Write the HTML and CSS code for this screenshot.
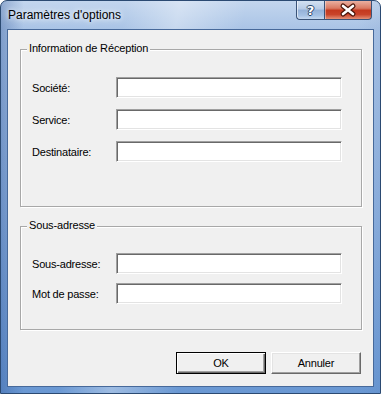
FILE: index.html
```html
<!DOCTYPE html>
<html lang="fr">
<head>
<meta charset="utf-8">
<title>Paramètres d'options</title>
<link rel="stylesheet" href="styles.css">
</head>
<body>
<div class="window">
  <div class="titlebar">
    <span class="title">Paramètres d'options</span>
    <div class="caption-btns">
      <div class="cbtn help"><span class="qmark">?</span></div>
      <div class="cbtn close">
        <svg width="46" height="18" viewBox="0 0 46 18">
          <path d="M18 5 L28 13 M28 5 L18 13" stroke="#4a1408" stroke-width="5" stroke-linecap="round" fill="none"/>
          <path d="M18 5 L28 13 M28 5 L18 13" stroke="#ffffff" stroke-width="2.6" stroke-linecap="round" fill="none"/>
        </svg>
      </div>
    </div>
  </div>
  <div class="client">
    <div class="group g1">
      <span class="legend">Information de Réception</span>
      <div class="rows rows1">
        <div class="row"><span class="label">Société:</span><div class="input"></div></div>
        <div class="row"><span class="label">Service:</span><div class="input"></div></div>
        <div class="row"><span class="label">Destinataire:</span><div class="input"></div></div>
      </div>
    </div>
    <div class="group g2">
      <span class="legend">Sous-adresse</span>
      <div class="rows rows2">
        <div class="row"><span class="label">Sous-adresse:</span><div class="input"></div></div>
        <div class="row"><span class="label">Mot de passe:</span><div class="input"></div></div>
      </div>
    </div>
    <div class="buttons">
      <div class="btn default">OK</div>
      <div class="btn">Annuler</div>
    </div>
  </div>
</div>
</body>
</html>
```
FILE: styles.css
```css
html, body {
  margin: 0;
  padding: 0;
  background: #ffffff;
}
body {
  font-family: "Liberation Sans", Arial, sans-serif;
}
.window {
  box-sizing: border-box;
  width: 381px;
  height: 394px;
  border: 1px solid #2b4a72;
  border-radius: 7px 7px 0 0;
  padding: 0 6px 6px 6px;
  display: flex;
  flex-direction: column;
  background:
    linear-gradient(100deg, rgba(255,255,255,0) 28%, rgba(255,255,255,0.35) 40%, rgba(255,255,255,0) 55%),
    linear-gradient(to right, rgba(30,70,140,0.3) 0, rgba(30,70,140,0) 6%, rgba(30,70,140,0) 94%, rgba(30,70,140,0.05) 100%),
    linear-gradient(to bottom, #c3d6ee 0, #aac4e6 28px, #8cafdd 55%, #6a98d3 100%);
}
.titlebar {
  height: 28px;
  flex: none;
  display: flex;
  justify-content: space-between;
  align-items: flex-start;
}
.title {
  margin: 7px 0 0 1px;
  font-size: 12px;
  line-height: 14px;
  color: #000;
  text-shadow: 0 0 4px #e8f0fa, 0 0 8px #ffffff;
}
.caption-btns {
  display: flex;
  margin-right: 2px;
}
.cbtn {
  box-sizing: border-box;
  height: 19px;
  border: 1px solid #3a5378;
  border-top: none;
  display: flex;
  align-items: center;
  justify-content: center;
}
.help {
  width: 28px;
  border-right: none;
  border-radius: 0 0 0 4px;
  background: linear-gradient(to bottom, #d3e1f1 0, #b6cbe6 45%, #94b1d8 50%, #a5c1e4 80%, #c4d8f0 100%);
  box-shadow: inset 1px 0 rgba(255,255,255,0.6);
}
.qmark {
  font-family: "DejaVu Sans", sans-serif;
  font-weight: bold;
  font-size: 13px;
  line-height: 13px;
  color: #ffffff;
  text-shadow: 1px 0 0 #2a4366, -1px 0 0 #2a4366, 0 1px 0 #2a4366, 0 -1px 0 #2a4366;
}
.close {
  width: 48px;
  border-radius: 0 0 4px 0;
  background: linear-gradient(to bottom, #eab0a0 0, #d97a63 40%, #c4391f 52%, #c9442a 75%, #e39077 100%);
  box-shadow: inset 1px 0 rgba(255,255,255,0.4);
}
.client {
  flex: 1;
  border: 1px solid #47699a;
  background: #f0f0f0;
  padding: 19px 11px 0 12px;
  display: flex;
  flex-direction: column;
}
.group {
  position: relative;
  border: 1px solid #a8a8a8;
  box-shadow: inset 1px 1px #ffffff, 1px 1px #ffffff;
}
.g1 {
  height: 158px;
  box-sizing: border-box;
  padding: 27px 0 0 11px;
}
.g2 {
  margin-top: 19px;
  height: 104px;
  box-sizing: border-box;
  padding: 26px 0 0 11px;
}
.legend {
  position: absolute;
  top: -8px;
  left: 6px;
  padding: 0 2px;
  background: #f0f0f0;
  font-size: 11px;
  line-height: 13px;
  letter-spacing: -0.15px;
  color: #000;
}
.rows {
  display: flex;
  flex-direction: column;
}
.rows1 { gap: 11px; }
.rows2 { gap: 9px; }
.row {
  display: flex;
  align-items: center;
  height: 21px;
}
.label {
  width: 84px;
  font-size: 11px;
  letter-spacing: -0.2px;
  color: #000;
}
.input {
  box-sizing: border-box;
  width: 226px;
  height: 21px;
  background: #fff;
  border: 1px solid;
  border-color: #a0a0a0 #ffffff #ffffff #a0a0a0;
  box-shadow: inset 1px 1px #696969, inset -1px -1px #e3e3e3;
}
.buttons {
  margin-top: 22px;
  display: flex;
  justify-content: flex-end;
  gap: 5px;
  padding-right: 1px;
}
.btn {
  box-sizing: border-box;
  width: 90px;
  height: 22px;
  background: #f0f0f0;
  border: 1px solid;
  border-color: #ffffff #696969 #696969 #ffffff;
  box-shadow: inset -1px -1px #a0a0a0, inset 1px 1px #e3e3e3;
  display: flex;
  align-items: center;
  justify-content: center;
  font-size: 11px;
  letter-spacing: -0.2px;
  color: #000;
}
.btn.default {
  border-color: #000;
  box-shadow: inset 1px 1px #ffffff, inset -1px -1px #696969, inset -2px -2px #a0a0a0;
}
```
